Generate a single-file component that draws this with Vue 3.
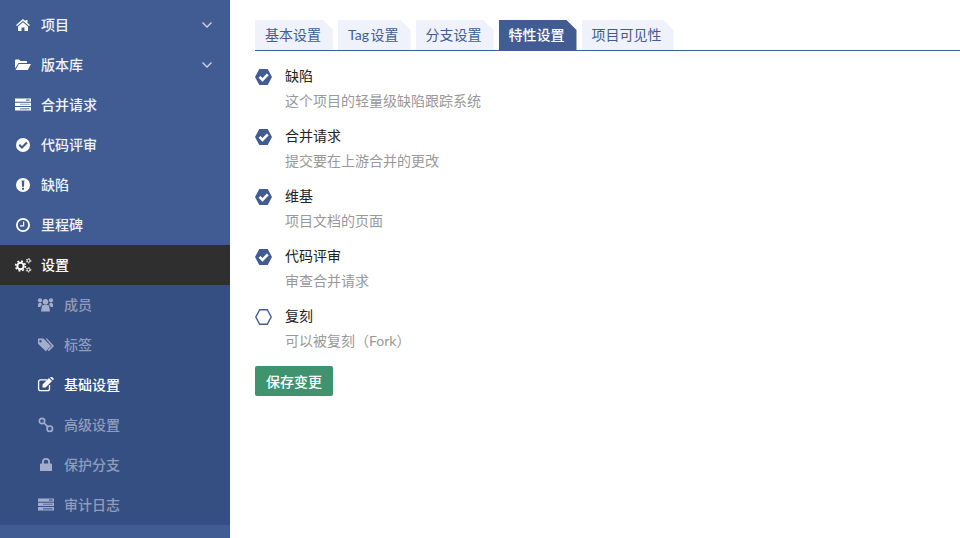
<script setup>
const mainNav = [
  { label: '项目', icon: 'home', chevron: true },
  { label: '版本库', icon: 'folder', chevron: true },
  { label: '合并请求', icon: 'bars' },
  { label: '代码评审', icon: 'check' },
  { label: '缺陷', icon: 'alert' },
  { label: '里程碑', icon: 'clock' },
  { label: '设置', icon: 'gears', active: true },
]
const subNav = [
  { label: '成员', icon: 'users' },
  { label: '标签', icon: 'tags' },
  { label: '基础设置', icon: 'edit', current: true },
  { label: '高级设置', icon: 'link' },
  { label: '保护分支', icon: 'lock' },
  { label: '审计日志', icon: 'bars' },
]
const tabs = [
  { label: '基本设置' },
  { label: 'Tag 设置' },
  { label: '分支设置' },
  { label: '特性设置', active: true },
  { label: '项目可见性' },
]
const features = [
  { title: '缺陷', desc: '这个项目的轻量级缺陷跟踪系统', on: true },
  { title: '合并请求', desc: '提交要在上游合并的更改', on: true },
  { title: '维基', desc: '项目文档的页面', on: true },
  { title: '代码评审', desc: '审查合并请求', on: true },
  { title: '复刻', desc: '可以被复刻（Fork）', on: false },
]
</script>

<template>
  <div class="page">
    <aside class="sidebar">
      <a v-for="item in mainNav" :key="item.label" class="row" :class="{ active: item.active }">
        <svg class="icon" viewBox="0 0 18 16">
          <g v-if="item.icon === 'home'">
            <path d="M9 2 2 8l1 1.100L9 4l6 5.100L16 8l-2.500-2.100V3h-2v1.200z" />
            <path d="M4 9.500 9 5.300l5 4.200V14h-3.500v-3.500h-3V14H4z" />
          </g>
          <g v-else-if="item.icon === 'folder'">
            <path d="M1 11.500v-8q0-1 1-1h3L6.500 4H12q1 0 1 1v1H4.500z" />
            <path d="M4.800 7H17l-3.200 6H1.500z" />
          </g>
          <g v-else-if="item.icon === 'bars'">
            <path d="M1 1.500h16v3.200H1zM1 5.700h16V9H1zM1 10h16v3.500H1z" />
            <path class="cut" d="M12 2.200h3.500v1.800H12zM6 6.800h9.500v1H6zM6 11h9.500v1.600H6z" />
          </g>
          <path v-else-if="item.icon === 'check'" fill-rule="evenodd" d="M9 1a7 7 0 1 1 0 14A7 7 0 0 1 9 1zM6 7 4.500 8.500 8 12l5.700-5.700-1.500-1.500L8 9z" />
          <path v-else-if="item.icon === 'alert'" fill-rule="evenodd" d="M9 1a7 7 0 1 1 0 14A7 7 0 0 1 9 1zM7.700 3.500l.3 6.200h2l.3-6.200zM8 10.700v2.100h2v-2.100z" />
          <path v-else-if="item.icon === 'clock'" fill-rule="evenodd" d="M9 1a7 7 0 1 1 0 14A7 7 0 0 1 9 1zM9 2.800a5.200 5.200 0 1 0 0 10.400A5.200 5.200 0 0 0 9 2.800zM9 4.500h1.200v5H6V8.300h3z" />
          <g v-else-if="item.icon === 'gears'" fill="none" stroke="currentColor">
            <circle cx="6.500" cy="9" r="3.200" stroke-width="2" />
            <circle cx="6.500" cy="9" r="4.900" stroke-width="1.600" stroke-dasharray="1.900 1.950" />
            <g v-for="cy in [3.800, 12.800]" :key="cy">
              <circle cx="14.500" :cy="cy" r="1.500" stroke-width="1" />
              <circle cx="14.500" :cy="cy" r="2.300" stroke-width=".8" stroke-dasharray="1.200 1.210" />
            </g>
          </g>
        </svg>
        <span class="row-label">{{ item.label }}</span>
        <svg v-if="item.chevron" class="chevron" viewBox="0 0 12 8"><path d="M1.500 1.500 6 6l4.500-4.500" /></svg>
      </a>
      <div class="submenu">
        <a v-for="item in subNav" :key="item.label" class="row sub" :class="{ current: item.current }">
          <svg class="icon" viewBox="0 0 18 16">
            <g v-if="item.icon === 'users'">
              <circle cx="8.500" cy="4.800" r="2.800" /><circle cx="3" cy="3.300" r="2.100" /><circle cx="14" cy="3.300" r="2.100" />
              <path d="M5 8.500q3.500-1.500 7 0l1 6H4zM1 10V7q1.500-1.800 3.300-1 0 1.500 .7 2.100-1.500.6-1.700 1.900zM16 10V7q-1.500-1.800-3.300-1 0 1.500-.7 2.100 1.500.6 1.700 1.900z" />
            </g>
            <g v-else-if="item.icon === 'tags'">
              <path fill-rule="evenodd" d="M1 1.500h5.500l7.500 7.500-5.200 5.200L1 6.800zM3.500 3a1.200 1.200 0 1 0 0 2.400A1.200 1.200 0 0 0 3.500 3z" />
              <path d="M8.500 1.500H10l7 7.500-5.200 5.200-1.100-1.100L14.900 9z" />
            </g>
            <g v-else-if="item.icon === 'edit'">
              <path fill="none" stroke="currentColor" stroke-width="1.300" d="M12.500 8v3.700q0 2-2 2H3.600q-2 0-2-2V4.800q0-2 2-2H10" />
              <path d="M5.500 7.500 12 1l3 3-6.500 6.500h-3zM12.800.3l3 3 1.200-1.300-1.800-1.900z" />
            </g>
            <g v-else-if="item.icon === 'link'" fill="none" stroke="currentColor" stroke-width="1.700">
              <circle cx="5" cy="4" r="2.700" /><circle cx="12.800" cy="11.700" r="2.700" /><path d="m7 6 3.700 3.700" />
            </g>
            <path v-else-if="item.icon === 'lock'" fill-rule="evenodd" d="M5 6.500V5a4 4 0 0 1 8 0v1.500h1q1 0 1 1V14H3V7.500q0-1 1-1zM6.800 6.500h4.400V5a2.200 2.200 0 0 0-4.400 0z" />
            <g v-else-if="item.icon === 'bars'">
              <path d="M1 1.500h16v3.200H1zM1 5.700h16V9H1zM1 10h16v3.500H1z" />
              <path class="cut-sub" d="M12 2.200h3.500v1.800H12zM6 6.800h9.500v1H6zM6 11h9.500v1.600H6z" />
            </g>
          </svg>
          <span class="row-label">{{ item.label }}</span>
        </a>
      </div>
    </aside>

    <main class="content">
      <nav class="tabs">
        <a v-for="tab in tabs" :key="tab.label" class="tab" :class="{ active: tab.active }">{{ tab.label }}</a>
      </nav>
      <div class="features">
        <div v-for="f in features" :key="f.title" class="feature">
          <svg class="hex" viewBox="0 0 17 16">
            <path v-if="f.on" fill="#415c93" d="M4.300 0h8.400L17 8l-4.300 8H4.300L0 8z" />
            <path v-if="f.on" fill="none" stroke="#fff" stroke-width="2.600" d="M4.500 7.800 7.500 10.800 12.800 5.400" />
            <path v-else fill="#fff" stroke="#415c93" stroke-width="1.400" d="M4.700.7h7.600L16.200 8l-3.900 7.300H4.700L.8 8z" />
          </svg>
          <div class="text">
            <div class="title">{{ f.title }}</div>
            <div class="desc">{{ f.desc }}</div>
          </div>
        </div>
      </div>
      <button class="save">保存变更</button>
    </main>
  </div>
</template>

<style>
html, body { margin: 0; height: 100%; overflow: hidden; background: #fff; }
</style>

<style scoped>
.page {
  display: flex;
  width: 960px;
  height: 538px;
  overflow: hidden;
  font-family: Lato, "Noto Sans CJK SC", sans-serif;
  font-size: 14px;
}
.sidebar {
  width: 230px;
  flex: none;
  padding-top: 5px;
  box-sizing: border-box;
  background: #415c93;
}
.row {
  display: flex;
  align-items: center;
  height: 40px;
  padding-left: 14px;
  color: #f0f3f8;
  font-weight: 500;
}
.row.active { background: #2f2f2f; color: #fff; }
.icon { width: 18px; height: 16px; flex: none; fill: currentColor; color: #fff; margin-right: 9px; }
.row-label { flex: 1; padding-bottom: 2px; }
.chevron { width: 12px; height: 8px; margin-right: 17px; fill: none; stroke: #cfd7e6; stroke-width: 1.300; }
.cut { fill: #8b9cc0; }
.cut-sub { fill: #5b6f9c; }
.submenu { background: #364f82; }
.row.sub { padding-left: 37px; color: #8e9dbd; font-weight: 500; }
.row.sub .icon { color: #a3afca; }
.row.sub.current { color: #fff; }
.row.sub.current .icon { color: #fff; }
.content { flex: 1; padding: 20px 0 0 25px; min-width: 0; }
.tabs { display: flex; gap: 5px; border-bottom: 1px solid #415c93; }
.tab {
  height: 30px;
  line-height: 30px;
  padding: 0 12px 0 10px;
  background: #eff2fa;
  color: #415c93;
  word-spacing: -2px;
  clip-path: polygon(0 0, calc(100% - 10px) 0, 100% 10px, 100% 100%, 0 100%);
}
.tab.active { background: #415c93; color: #fff; font-weight: 500; }
.features { padding-top: 5px; }
.feature { display: flex; height: 60px; padding-top: 9px; box-sizing: border-box; }
.hex { width: 17px; height: 16px; flex: none; margin: 4px 13px 0 0; }
.title { color: #222; line-height: 22px; }
.desc { color: #999; line-height: 22px; margin-top: 3px; }
.save {
  display: block;
  width: 78px;
  height: 30px;
  margin-top: 10px;
  padding: 0;
  border: 0;
  border-radius: 2px;
  background: #3f936f;
  color: #fff;
  font: inherit;
  font-weight: 500;
}
</style>
